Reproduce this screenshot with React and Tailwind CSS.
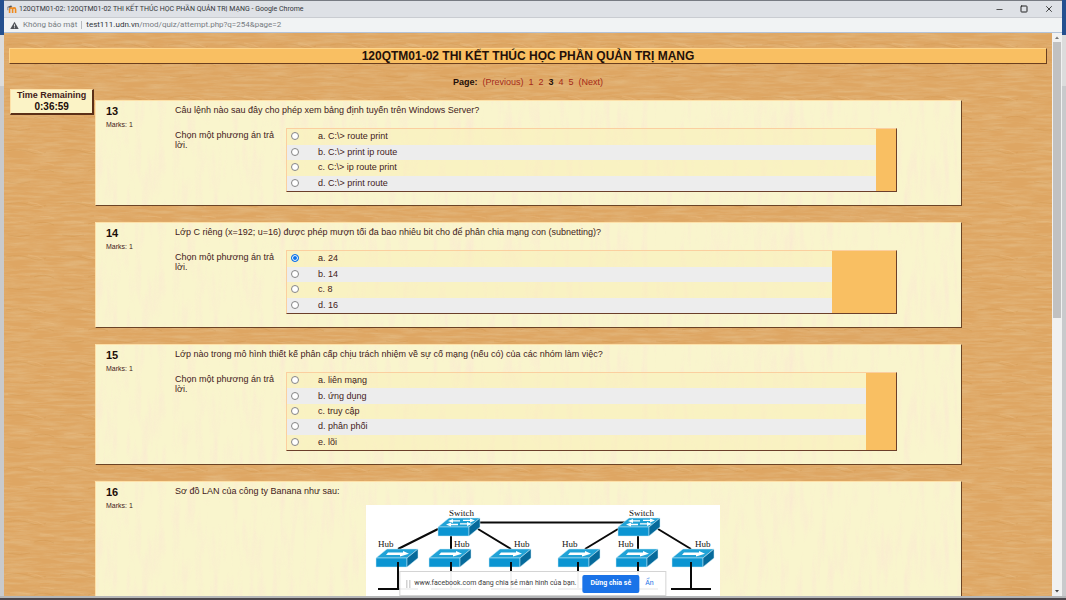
import { useState } from "react";
import { Minus, Square, X } from "lucide-react";

const questions = [
  {
    number: 13,
    text: "Câu lệnh nào sau đây cho phép xem bảng định tuyến trên Windows Server?",
    options: ["a. C:\\> route print", "b. C:\\> print ip route", "c. C:\\> ip route print", "d. C:\\> print route"],
    height: "h-16",
    feedback: "w-[20px]",
    selected: null,
  },
  {
    number: 14,
    text: "Lớp C riêng (x=192; u=16) được phép mượn tối đa bao nhiêu bit cho để phân chia mạng con (subnetting)?",
    options: ["a. 24", "b. 14", "c. 8", "d. 16"],
    height: "h-16",
    feedback: "w-[64px]",
    selected: 0,
  },
  {
    number: 15,
    text: "Lớp nào trong mô hình thiết kế phân cấp chịu trách nhiệm về sự cố mạng (nếu có) của các nhóm làm việc?",
    options: ["a. liên mạng", "b. ứng dụng", "c. truy cập", "d. phân phối", "e. lõi"],
    height: "h-[79px]",
    feedback: "w-[30px]",
    selected: null,
  },
];

function GrainDefs() {
  return (
    <svg className="absolute size-0" aria-hidden="true">
      <defs>
        <filter id="oak-noise" x="0" y="0" width="100%" height="100%">
          <feTurbulence type="fractalNoise" baseFrequency="0.035 0.35" numOctaves="4" seed="4" />
          <feColorMatrix values="0 0 0 0 0.78  0 0 0 0 0.52  0 0 0 0 0.25  2 0 0 0 -0.7" />
        </filter>
        <filter id="maple-noise" x="0" y="0" width="100%" height="100%">
          <feTurbulence type="fractalNoise" baseFrequency="0.13 0.02" numOctaves="3" seed="9" />
          <feColorMatrix values="0 0 0 0 0.96  0 0 0 0 0.82  0 0 0 0 0.64  2.4 0 0 0 -1.1" />
        </filter>
        <pattern id="oak-veins" width="54" height="53" patternUnits="userSpaceOnUse">
          <path d="M2 12q14 -3 24 1t16 0M30 32q10 -4 20 1M4 43q12 3 22 0" fill="none" stroke="#c98a3f" strokeOpacity=".25" />
          <path d="M24 10q10 1 16 5M36 24q8 0 14 2M6 30q12 -1 20 1" fill="none" stroke="#efc58c" strokeOpacity=".3" />
        </pattern>
      </defs>
    </svg>
  );
}

function Oak() {
  return (
    <svg className="absolute inset-0 size-full" aria-hidden="true">
      <rect width="100%" height="100%" fill="#dea663" />
      <rect width="100%" height="100%" filter="url(#oak-noise)" opacity=".6" />
      <rect width="100%" height="100%" fill="url(#oak-veins)" />
    </svg>
  );
}

function Maple() {
  return (
    <svg className="absolute inset-0 size-full" aria-hidden="true">
      <rect width="100%" height="100%" filter="url(#maple-noise)" opacity=".75" />
    </svg>
  );
}

function MoodleIcon() {
  return (
    <svg viewBox="0 0 10 10" className="size-2.5" aria-hidden="true">
      <path d="M2.6 9V5.400q0-1.500 1.500-1.500t1.500 1.500V9M5.600 9V5.400q0-1.500 1.500-1.500t1.500 1.500V9" fill="none" stroke="#f08a1c" strokeWidth="1.600" />
      <path d="M.2 3 4 1.400l1.400.8-2.600 1.600z" fill="#555" />
      <path d="M.8 3v3.200" stroke="#555" strokeWidth=".6" />
    </svg>
  );
}

function TitleBar() {
  return (
    <header className="shrink-0">
      <div className="flex h-[17px] items-center justify-between border-t border-[#777b82] bg-[#dee1e6] pl-[3px]">
        <div className="flex items-center gap-0.5">
          <MoodleIcon />
          <span className="font-[Roboto,'Noto_Sans',sans-serif] text-[7px] leading-3 text-[#33363a]">
            120QTM01-02: 120QTM01-02 THI KẾT THÚC HỌC PHẦN QUẢN TRỊ MẠNG - Google Chrome
          </span>
        </div>
        <div className="flex gap-4 pr-2 text-[#222]">
          <button aria-label="Minimize"><Minus size={9} /></button>
          <button aria-label="Maximize"><Square size={8} strokeWidth={3} /></button>
          <button aria-label="Close"><X size={10} /></button>
        </div>
      </div>
      <div className="flex h-4 items-center border-y border-t-[#c9ccd1] border-b-[#b3c3d9] bg-[#f1f3f4] pl-1.5 font-[Roboto,'Noto_Sans',sans-serif] text-[8px] leading-3 text-[#777c82]">
        <svg viewBox="0 0 10 10" className="mr-1 size-[9px]" aria-hidden="true">
          <path d="M5 .8 9.7 9H.3z" fill="#505358" />
          <path d="M5 3.7v2.5M5 7v1" stroke="#f1f3f4" />
        </svg>
        <span>Không bảo mật</span>
        <span className="mx-1 h-2 w-px bg-[#b6b9bd]" />
        <span><span className="text-[#303338]">test111.udn.vn</span>/mod/quiz/attempt.php?q=254&amp;page=2</span>
      </div>
    </header>
  );
}

function Card({ number, text, grow, children }) {
  return (
    <section className={`relative flex border border-t-[#fde0a8] border-r-[#6b4426] border-b-[#6b4426] border-l-[#fde0a8] bg-[#f9f5cd] pl-2.5 ${grow ? "pb-8" : "pb-[13px]"}`}>
      <Maple />
      <div className="relative w-[69px] shrink-0 pt-1">
        <h2 className="text-[11px] leading-3 font-bold text-[#1d0d08]">{number}</h2>
        <p className="mt-1 text-[7px] leading-2">Marks: 1</p>
      </div>
      <div className="relative min-w-0 flex-1">
        <p className="pt-[3px] text-[9px] leading-3">{text}</p>
        {children}
      </div>
    </section>
  );
}

function Question({ question }) {
  const [selected, setSelected] = useState(question.selected);
  return (
    <Card number={question.number} text={question.text}>
      <fieldset className="mt-3 mr-16 flex" aria-label={`Câu ${question.number}`}>
        <p className="w-[111px] shrink-0 pt-0.5 pr-2 text-[9px] leading-[10px]">Chọn một phương án trả lời.</p>
        <div className={`flex min-w-0 flex-1 border border-t-[#fbcf9f] border-r-[#6b3f2a] border-b-[#6b3f2a] border-l-[#fbcf9f] ${question.height}`}>
          <div className="flex min-w-0 flex-1 flex-col">
            {question.options.map((option, i) => (
              <label key={option} className="flex flex-1 items-center bg-[#f9efb8]/50 pb-px pl-1 text-[9px] leading-3 even:bg-[#ededed]">
                <input
                  type="radio"
                  name={`q${question.number}`}
                  checked={selected === i}
                  onChange={() => setSelected(i)}
                  className="mr-[19px] size-2 appearance-none rounded-full border border-[#858585] bg-white checked:border-[#0b72ea] checked:bg-[#0b72ea] checked:ring-1 checked:ring-white checked:ring-inset"
                />
                {option}
              </label>
            ))}
          </div>
          <div className={`shrink-0 bg-[#f9bf62] ${question.feedback}`} />
        </div>
      </fieldset>
    </Card>
  );
}

function Device({ x, y, double }) {
  return (
    <g transform={`translate(${x} ${y})`} stroke="#c8eaf6" strokeWidth=".5" strokeLinejoin="round">
      <path d="M0 9 11 0h31L31 9z" fill="#20a2d6" />
      <path d="M0 9h31v9H0z" fill="#0b95d2" />
      <path d="M31 9 42 0v9L31 18z" fill="#066a9b" />
      {double ? (
        <g fill="#fff" stroke="none">
          <path d="m10 3 5-2v1.200h7v1.400h-7V5zM8 6.600l5-2v1.200h7v1.400h-7v1.300z" />
          <path d="m37 2.500-5-2v1.200h-7v1.400h7v1.300zM34 6l-5-2v1.200h-7v1.400h7V8z" />
        </g>
      ) : (
        <path d="M12 3.600h15V2l6 2.700-9 2.800V6H10z" fill="#fff" stroke="none" />
      )}
    </g>
  );
}

function NetworkDiagram() {
  const hubs = [
    { x: 10, label: 12, line: 32 },
    { x: 63, label: 88, line: 85 },
    { x: 123, label: 148, line: 145 },
    { x: 192, label: 196, line: 212 },
    { x: 250, label: 252, line: 272 },
    { x: 306, label: 329, line: 325 },
  ];
  return (
    <svg width="354" height="100" viewBox="0 0 354 100" role="img" aria-label="Sơ đồ LAN" className="bg-white">
      <path
        d="M113 17.500H264M72 24 32 44M85 28V44M112 24l33 20M252 24 219 44M272 28V44M292 24l33 20"
        stroke="#0a0a0a" strokeWidth="2" fill="none"
      />
      {hubs.map((h) => (
        <g key={h.x}>
          <Device x={h.x} y={44} />
          <path d={`M${h.line} 57V84M${h.line - 20} 84h40`} stroke="#0a0a0a" strokeWidth="2" />
        </g>
      ))}
      <Device x={72} y={13} double />
      <Device x={252} y={13} double />
      <g fontFamily="Liberation Serif, serif" fontSize="9" fill="#111">
        <text x="83" y="11">Switch</text>
        <text x="263" y="11">Switch</text>
        {hubs.map((h) => (
          <text key={h.x} x={h.label} y="42">Hub</text>
        ))}
      </g>
    </svg>
  );
}

function Scrollbar() {
  return (
    <div className="flex w-2.5 shrink-0 flex-col bg-[#f1f1f1] px-px" aria-hidden="true">
      <svg viewBox="0 0 8 9" className="h-[9px] w-2"><path d="M2 6h4L4 3.500z" fill="#777" /></svg>
      <div className="h-[49%] w-full bg-[#c1c1c1]" />
      <svg viewBox="0 0 8 9" className="mt-auto h-[9px] w-2"><path d="M2 3h4L4 5.500z" fill="#444" /></svg>
    </div>
  );
}

export default function App() {
  return (
    <div className="relative flex h-screen flex-col overflow-hidden bg-[linear-gradient(#24508f_35px,#dcdcdc_35px,#dcdcdc_86px,#c9cacc_86px)] font-['Liberation_Sans',Arial,sans-serif] text-[#43211a]">
      <GrainDefs />
      <div className="mx-1 flex min-h-0 flex-1 flex-col">
        <TitleBar />
        <div className="flex min-h-0 flex-1">
          <main className="relative min-w-0 flex-1 overflow-hidden">
            <Oak />
            <div className="relative pt-[15px]">
              <h1 className="mx-[5px] border border-t-[#fdd48a] border-r-[#6b3f1f] border-b-[#6b3f1f] border-l-[#fdd48a] bg-[#f9bf62] text-center text-[12px] leading-[14px] font-bold text-[#24100a]">
                120QTM01-02 THI KẾT THÚC HỌC PHẦN QUẢN TRỊ MẠNG
              </h1>
              <nav className="mt-3 flex justify-center gap-[5px] text-[9px] leading-3 text-[#a52a1a]" aria-label="Page">
                <b className="text-[#24100a]">Page:</b>
                <a href="#previous">(Previous)</a>
                <a href="#1">1</a>
                <a href="#2">2</a>
                <b className="text-[#24100a]">3</b>
                <a href="#4">4</a>
                <a href="#5">5</a>
                <a href="#next">(Next)</a>
              </nav>
              <div className="mr-[90px] ml-[91px] mt-3 flex flex-col gap-4">
                {questions.map((q) => (
                  <Question key={q.number} question={q} />
                ))}
                <Card number={16} text="Sơ đồ LAN của công ty Banana như sau:" grow>
                  <div className="mt-2 mr-[50px] flex justify-center">
                    <NetworkDiagram />
                  </div>
                </Card>
              </div>
            </div>
            <aside className="absolute top-14 left-1.5 border border-t-[#fde0a8] border-r-2 border-r-[#5b3018] border-b-2 border-b-[#5b3018] border-l-[#fde0a8] bg-[#fbf3c6] px-1.5 text-center font-bold">
              <div className="text-[9px] leading-[11px]">Time Remaining</div>
              <div className="text-[10px] leading-3 text-[#1d0d08]">0:36:59</div>
            </aside>
          </main>
          <Scrollbar />
        </div>
      </div>
      <footer className="h-1 shrink-0 border-y-2 border-t-[#b4b6b8] border-b-[#4b464b]" />
      <div className="absolute bottom-1 left-1/2 flex h-[25px] -translate-x-1/2 items-center border border-[#d4d4d4] bg-white/95 px-1.5 font-[Roboto,'Noto_Sans',sans-serif] text-[7px] whitespace-nowrap text-[#404040]">
        <span className="mr-1 h-2 w-1 border-x border-[#bbb]" />
        <span className="mr-1.5">www.facebook.com đang chia sẻ màn hình của bạn.</span>
        <button className="h-[18px] rounded-xs bg-[#1a73e8] px-2 font-bold text-white">Dừng chia sẻ</button>
        <a href="#hide" className="px-1.5 text-[#1a73e8]">Ẩn</a>
      </div>
    </div>
  );
}
